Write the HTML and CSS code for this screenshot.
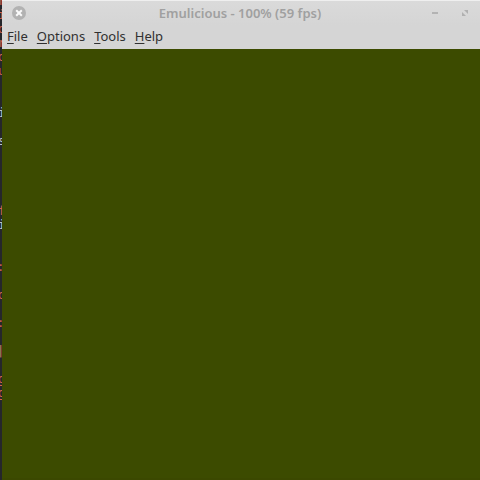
FILE: index.html
```html
<!DOCTYPE html>
<html lang="en">
<head>
<meta charset="utf-8">
<title>Emulicious</title>
<link rel="stylesheet" href="styles.css">
</head>
<body>
<div class="desktop">
<pre class="editor" aria-hidden="true"><code class="source">r
i
o
r
o
u


<span class="plain">i</span>

<span class="plain">s</span>




f
<span class="plain">i</span>


<span class="narrow">:</span>

o

<span class="narrow">:</span>

<span class="tan narrow">|</span>

g
g</code></pre>
<main class="window">
  <header class="titlebar">
    <button class="control close" aria-label="Close"><svg width="14" height="14" viewBox="0 0 14 14"><circle cx="7" cy="7" r="7" fill="#b2b2b2"/><path d="M4.2 4.2l5.6 5.6m0-5.6l-5.6 5.6" stroke="#fafafa" stroke-width="2"/></svg></button>
    <h1 class="title">Emulicious - 100% (59 fps)</h1>
    <div class="controls">
      <button class="control" aria-label="Minimize"><svg width="6" height="6" viewBox="0 0 6 6"><path d="M0 2h6v2H0z" fill="#b3b3b3"/></svg></button>
      <button class="control" aria-label="Maximize"><svg width="6" height="6" viewBox="0 0 6 6"><path d="M2 0h4v4zM0 2l4 4H0z" fill="#b0b0b0"/></svg></button>
    </div>
  </header>
  <nav class="menubar">
    <button class="menu"><u>F</u>ile</button>
    <button class="menu"><u>O</u>ptions</button>
    <button class="menu"><u>T</u>ools</button>
    <button class="menu"><u>H</u>elp</button>
  </nav>
  <section class="screen" aria-label="Emulator screen"></section>
</main>
</div>
</body>
</html>
```
FILE: styles.css
```css
* { box-sizing: border-box; }
body { margin: 0; }
.desktop {
  display: grid;
  grid-template-columns: 2px 1fr;
  height: 100vh;
  overflow: hidden;
  background: #25262b;
}
.editor {
  margin: -6px 0 0;
  overflow: hidden;
  color: #d0614c;
  font: 12px/14px "DejaVu Sans Mono", monospace;
}
/* The editor is scrolled sideways behind the emulator window. */
.source {
  display: block;
  margin-left: -2px;
  font: inherit;
}
.plain { color: #b9c3cb; }
.tan { color: #c5865c; }
.narrow { margin-left: -1px; }
.window {
  display: flex;
  flex-direction: column;
  min-width: 0;
  font: 13px/18px "Noto Sans", sans-serif;
  background: linear-gradient(#dadada, #d5d5d5 24px);
  border-top: 1px solid #efefef;
}
.titlebar {
  display: grid;
  grid-template-columns: 1fr auto 1fr;
  align-items: center;
  height: 23px;
  padding: 0 12px 0 10px;
}
.control {
  display: block;
  padding: 0;
  border: 0;
  background: none;
}
.control svg { display: block; }
.close { justify-self: start; }
.title {
  margin: 0;
  color: #a0a0a0;
  font-size: 13px;
  font-weight: 600;
}
.controls {
  display: flex;
  justify-content: flex-end;
  gap: 24px;
}
.menubar {
  display: flex;
  gap: 9px;
  height: 25px;
  padding: 0 5px 2px;
  align-items: center;
}
.menu {
  padding: 0;
  border: 0;
  background: none;
  color: #303030;
  font: inherit;
}
.menu u { text-underline-offset: 2px; }
.screen {
  flex: 1;
  background: #3c4b00;
  border-bottom: 2px solid #3b4800;
}
```
